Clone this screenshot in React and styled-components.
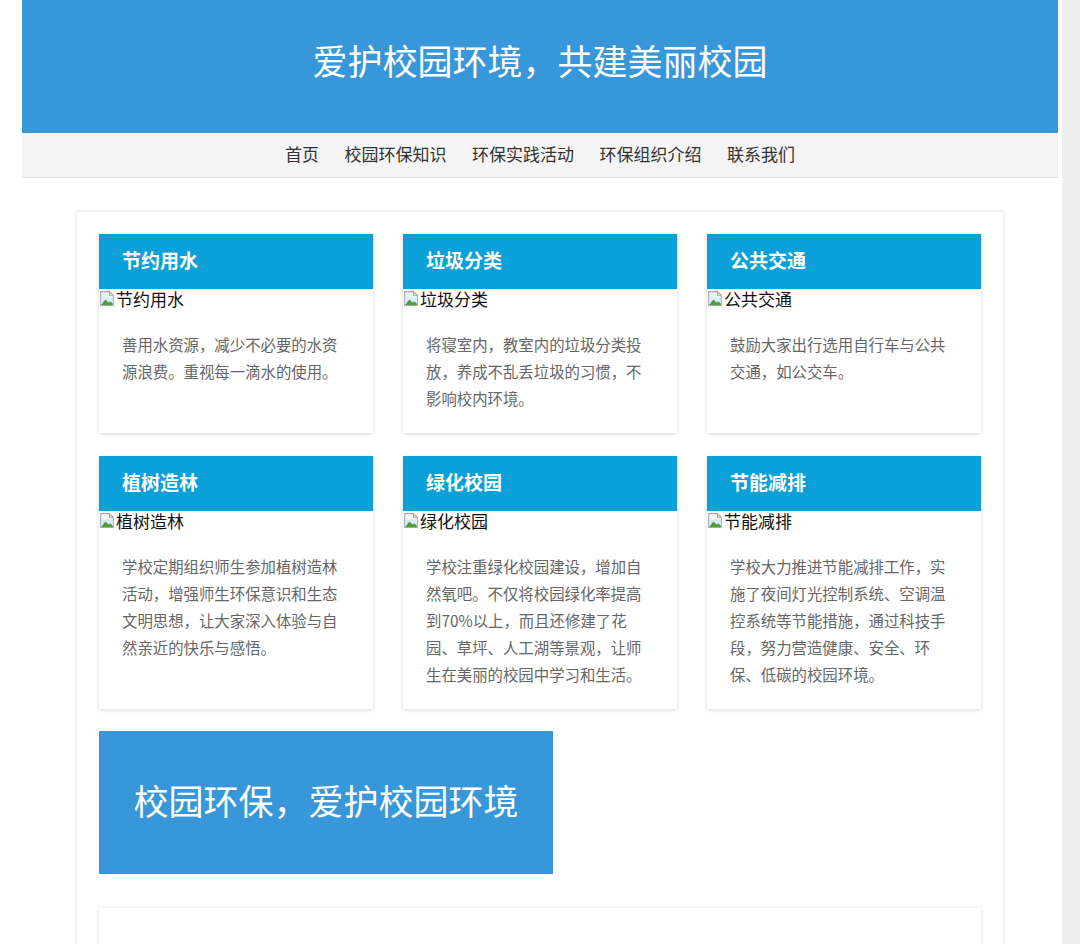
import React from "react";
import styled, { createGlobalStyle } from "styled-components";

const GlobalStyle = createGlobalStyle`
  html, body {
    margin: 0;
    padding: 0;
    background: #fff;
  }
  body {
    font-family: "Noto Sans CJK SC", "Noto Sans", sans-serif;
    color: #333;
  }
  * { box-sizing: border-box; }
`;

const Shell = styled.div`
  display: flex;
  min-height: 100vh;
  overflow: hidden;
`;

const Page = styled.div`
  flex: 1;
  padding: 0 4px 0 22px;
`;

const Track = styled.div`
  width: 18px;
  flex: none;
  background: #eeeeee;
`;

const Masthead = styled.header`
  height: 133px;
  padding-bottom: 14px;
  background: #3897d8;
  display: flex;
  align-items: center;
  justify-content: center;
`;

const SiteTitle = styled.h1`
  margin: 0;
  font-size: 35px;
  font-weight: 400;
  color: #fff;
  line-height: 1;
`;

const NavBar = styled.nav`
  height: 45px;
  padding-bottom: 3px;
  background: #f4f4f4;
  border-bottom: 1px solid #dcdcdc;
  display: flex;
  align-items: center;
  justify-content: center;
  gap: 25.5px;
`;

const NavLink = styled.a`
  font-size: 17px;
  color: #333;
  text-decoration: none;
  line-height: 1;
`;

const Content = styled.main`
  margin: 34px 55px 0;
  padding: 22px 22px 40px;
  background: #fff;
  box-shadow: 0 0 4px rgba(0, 0, 0, 0.18);
`;

const CardGrid = styled.div`
  display: grid;
  grid-template-columns: repeat(3, 274px);
  column-gap: 30px;
  row-gap: 23px;
`;

const Card = styled.section`
  background: #fff;
  box-shadow: 0 1px 4px rgba(0, 0, 0, 0.16);
  padding-bottom: 22px;
`;

const CardHead = styled.h2`
  margin: 0;
  height: 55px;
  padding: 0 23px 4px;
  display: flex;
  align-items: center;
  background: #0ba0d8;
  color: #fff;
  font-size: 19px;
  font-weight: 700;
`;

const AltLine = styled.div`
  height: 21px;
  padding-bottom: 3px;
  display: flex;
  align-items: center;
  font-size: 17px;
  color: #111;
  line-height: 1;
`;

const BrokenIcon = styled.svg`
  width: 17px;
  height: 17px;
  flex: none;
`;

const CardText = styled.p`
  margin: 21px 0 0;
  padding: 0 23px;
  font-size: 15.4px;
  line-height: 26.8px;
  color: #666;
`;

const Banner = styled.div`
  width: 454px;
  height: 143px;
  margin-top: 22px;
  padding-bottom: 6px;
  background: #3897d8;
  display: flex;
  align-items: center;
  justify-content: center;
  color: #fff;
  font-size: 35px;
  line-height: 1;
`;

const Panel = styled.section`
  margin-top: 34px;
  height: 120px;
  background: #fff;
  box-shadow: 0 1px 4px rgba(0, 0, 0, 0.16);
`;

const navItems = ["首页", "校园环保知识", "环保实践活动", "环保组织介绍", "联系我们"];

const cards = [
  { title: "节约用水", text: "善用水资源，减少不必要的水资源浪费。重视每一滴水的使用。" },
  { title: "垃圾分类", text: "将寝室内，教室内的垃圾分类投放，养成不乱丢垃圾的习惯，不影响校内环境。" },
  { title: "公共交通", text: "鼓励大家出行选用自行车与公共交通，如公交车。" },
  { title: "植树造林", text: "学校定期组织师生参加植树造林活动，增强师生环保意识和生态文明思想，让大家深入体验与自然亲近的快乐与感悟。" },
  { title: "绿化校园", text: "学校注重绿化校园建设，增加自然氧吧。不仅将校园绿化率提高到70%以上，而且还修建了花园、草坪、人工湖等景观，让师生在美丽的校园中学习和生活。" },
  { title: "节能减排", text: "学校大力推进节能减排工作，实施了夜间灯光控制系统、空调温控系统等节能措施，通过科技手段，努力营造健康、安全、环保、低碳的校园环境。" },
];

// Placeholder glyph for a picture that has not loaded
function MissingPicture() {
  return (
    <BrokenIcon viewBox="0 0 16 16" aria-hidden="true">
      <path d="M1.5 1.5h8.5l3.5 3.5v9.5h-12z" fill="#f4f4f4" stroke="#a8a8a8" strokeWidth="1" />
      <path d="M10 1.5v3.5h3.5" fill="none" stroke="#a8a8a8" strokeWidth="1" />
      <path d="M2 14V7h11v7z" fill="#d6eaf8" />
      <path d="M2 14l4-5 3 3 1.5-1.5L13 13v1z" fill="#4f9e35" />
    </BrokenIcon>
  );
}

export default function App() {
  return (
    <>
      <GlobalStyle />
      <Shell>
        <Page>
          <Masthead>
            <SiteTitle>爱护校园环境，共建美丽校园</SiteTitle>
          </Masthead>
          <NavBar>
            {navItems.map((item) => (
              <NavLink key={item} href="#">{item}</NavLink>
            ))}
          </NavBar>
          <Content>
            <CardGrid>
              {cards.map((c) => (
                <Card key={c.title}>
                  <CardHead>{c.title}</CardHead>
                  <AltLine>
                    <MissingPicture />
                    {c.title}
                  </AltLine>
                  <CardText>{c.text}</CardText>
                </Card>
              ))}
            </CardGrid>
            <Banner>校园环保，爱护校园环境</Banner>
            <Panel />
          </Content>
        </Page>
        <Track />
      </Shell>
    </>
  );
}
